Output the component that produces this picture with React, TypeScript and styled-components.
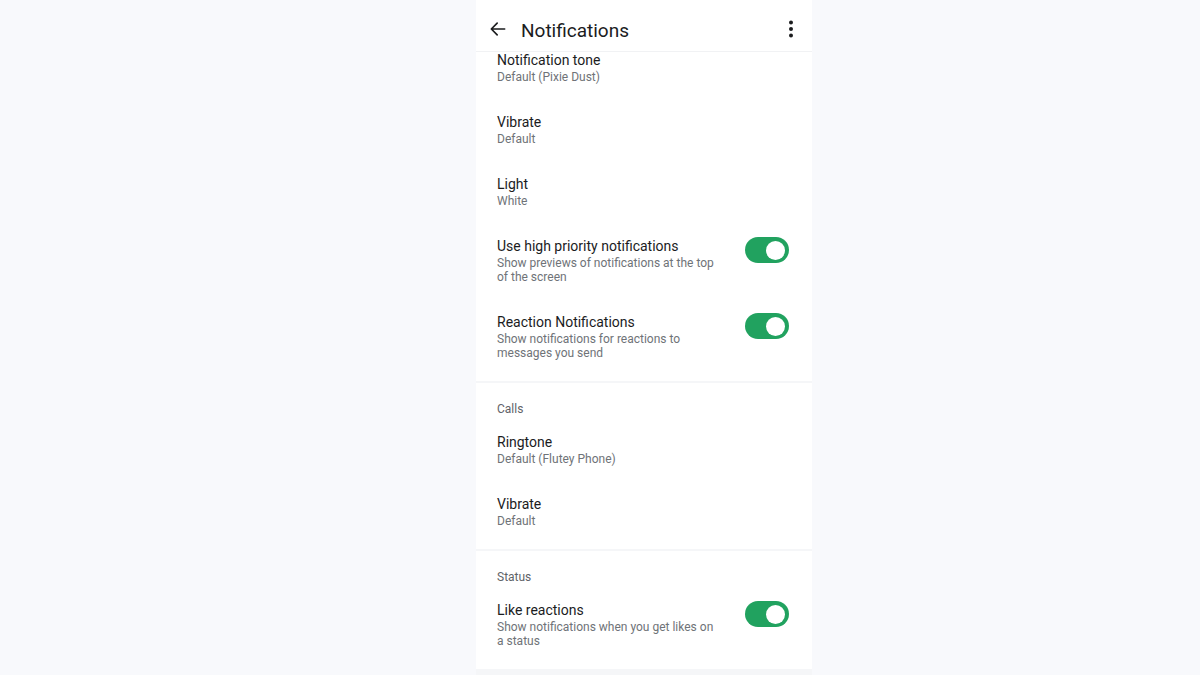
import React from "react";
import styled, { createGlobalStyle } from "styled-components";

const Global = createGlobalStyle`
  html, body { margin: 0; padding: 0; background: #f8f9fc; }
  body { font-family: Roboto, "Noto Sans", "Liberation Sans", sans-serif; -webkit-font-smoothing: antialiased; }
`;

const Page = styled.div`
  width: 1200px;
  height: 675px;
  overflow: hidden;
  display: flex;
  padding-left: 476px;
  box-sizing: border-box;
`;

const Phone = styled.div`
  width: 336px;
  height: 675px;
  display: flex;
  flex-direction: column;
  background: #f5f6f8;
`;

const StatusBar = styled.div`
  height: 4px;
  overflow: hidden;
  background: #ffffff;
  display: flex;
  justify-content: space-between;
  align-items: flex-end;
  padding: 0 22px 0 22px;
  font-size: 11px;
  color: #555;
`;

const StatusText = styled.span`
  line-height: 1;
  transform: translateY(-7px);
`;

const Header = styled.div`
  height: 48px;
  background: #ffffff;
  display: flex;
  align-items: center;
  padding: 3px 9px 0 10px;
  box-sizing: border-box;
  border-bottom: 1px solid #f1f2f4;
  position: relative;
  z-index: 2;
`;

const IconButton = styled.div`
  width: 24px;
  height: 24px;
  display: flex;
  align-items: center;
  justify-content: center;
  color: #1b1c1e;
`;

const Title = styled.div`
  flex: 1;
  margin-left: 11px;
  font-size: 19px;
  color: #1b1c1e;
  padding-top: 2px;
`;

const Viewport = styled.div`
  flex: 1;
  overflow: hidden;
`;

const List = styled.div`
  margin-top: -16px;
  display: flex;
  flex-direction: column;
  gap: 2px;
`;

const Section = styled.div`
  background: #ffffff;
  padding-bottom: 7px;
`;

const SectionTitle = styled.div`
  padding: 18px 21px 1px;
  font-size: 12px;
  line-height: 16px;
  color: #5f6368;
`;

const Row = styled.div`
  display: flex;
  align-items: flex-start;
  padding: 14px 23px 14px 21px;
`;

const Texts = styled.div`
  flex: 1;
  padding-right: 24px;
  min-width: 0;
`;

const RowTitle = styled.div`
  font-size: 14px;
  line-height: 20px;
  color: #1b1c1e;
`;

const RowSub = styled.div`
  font-size: 12px;
  line-height: 14px;
  color: #6f7378;
`;

const Track = styled.div<{ $on: boolean }>`
  width: 44px;
  height: 26px;
  border-radius: 13px;
  margin-top: 1px;
  background: ${(p) => (p.$on ? "#21a25f" : "#c4c7cc")};
  display: flex;
  align-items: center;
  justify-content: ${(p) => (p.$on ? "flex-end" : "flex-start")};
  padding: 0 4px;
  box-sizing: border-box;
  flex-shrink: 0;
`;

const Knob = styled.div`
  width: 19px;
  height: 19px;
  border-radius: 50%;
  background: #ffffff;
`;

type Item = { title: string; sub: string; toggle?: boolean };

const Toggle = ({ on }: { on: boolean }) => (
  <Track $on={on}>
    <Knob />
  </Track>
);

const SettingRow = ({ item }: { item: Item }) => (
  <Row>
    <Texts>
      <RowTitle>{item.title}</RowTitle>
      <RowSub>{item.sub}</RowSub>
    </Texts>
    {item.toggle !== undefined && <Toggle on={item.toggle} />}
  </Row>
);

const messages: Item[] = [
  { title: "Notification tone", sub: "Default (Pixie Dust)" },
  { title: "Vibrate", sub: "Default" },
  { title: "Light", sub: "White" },
  {
    title: "Use high priority notifications",
    sub: "Show previews of notifications at the top of the screen",
    toggle: true,
  },
  {
    title: "Reaction Notifications",
    sub: "Show notifications for reactions to messages you send",
    toggle: true,
  },
];

const calls: Item[] = [
  { title: "Ringtone", sub: "Default (Flutey Phone)" },
  { title: "Vibrate", sub: "Default" },
];

const status: Item[] = [
  {
    title: "Like reactions",
    sub: "Show notifications when you get likes on a status",
    toggle: true,
  },
];

export default function App() {
  return (
    <>
      <Global />
      <Page>
        <Phone>
          <StatusBar>
            <StatusText>9:41</StatusText>
            <StatusText>▮▮ ▮</StatusText>
          </StatusBar>
          <Header>
            <IconButton>
              <svg width="20" height="20" viewBox="0 0 24 24" fill="none">
                <path
                  d="M20 12H5M11 5l-7 7 7 7"
                  stroke="#1b1c1e"
                  strokeWidth="2"
                  strokeLinecap="round"
                  strokeLinejoin="round"
                />
              </svg>
            </IconButton>
            <Title>Notifications</Title>
            <IconButton>
              <svg width="24" height="24" viewBox="0 0 24 24">
                <circle cx="12" cy="5.5" r="2" fill="#1b1c1e" />
                <circle cx="12" cy="12" r="2" fill="#1b1c1e" />
                <circle cx="12" cy="18.5" r="2" fill="#1b1c1e" />
              </svg>
            </IconButton>
          </Header>
          <Viewport>
            <List>
              <Section>
                {messages.map((m, i) => (
                  <SettingRow key={i} item={m} />
                ))}
              </Section>
              <Section>
                <SectionTitle>Calls</SectionTitle>
                {calls.map((m, i) => (
                  <SettingRow key={i} item={m} />
                ))}
              </Section>
              <Section>
                <SectionTitle>Status</SectionTitle>
                {status.map((m, i) => (
                  <SettingRow key={i} item={m} />
                ))}
              </Section>
            </List>
          </Viewport>
        </Phone>
      </Page>
    </>
  );
}
